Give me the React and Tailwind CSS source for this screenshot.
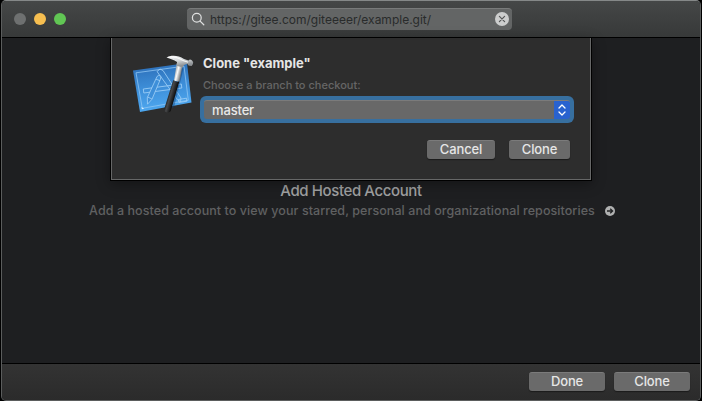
import React from "react";

function XcodeIcon() {
  return (
    <svg className="h-[70px] w-[75px] shrink-0" viewBox="0 0 75 70" fill="none">
      <defs>
        <linearGradient id="sheet" x1="35" y1="14" x2="40" y2="60" gradientUnits="userSpaceOnUse">
          <stop stopColor="#2d70ba" />
          <stop offset=".5" stopColor="#3e8fd9" />
          <stop offset="1" stopColor="#4ea8f0" />
        </linearGradient>
        <linearGradient id="steel" x1="52" y1="5" x2="54" y2="16" gradientUnits="userSpaceOnUse">
          <stop stopColor="#f4f5f5" />
          <stop offset=".5" stopColor="#d5d8da" />
          <stop offset="1" stopColor="#8f9396" />
        </linearGradient>
        <linearGradient id="shaft" x1="50" y1="22" x2="56" y2="23.5" gradientUnits="userSpaceOnUse">
          <stop stopColor="#a9adaf" />
          <stop offset=".4" stopColor="#fafafa" />
          <stop offset="1" stopColor="#777b7e" />
        </linearGradient>
        <linearGradient id="grip" x1="43" y1="44" x2="50" y2="46" gradientUnits="userSpaceOnUse">
          <stop stopColor="#1b1c1d" />
          <stop offset=".35" stopColor="#48494b" />
          <stop offset="1" stopColor="#0c0c0c" />
        </linearGradient>
      </defs>
      <path d="M8 20.5 62 13l4.500 39.500L15 62z" fill="url(#sheet)" />
      <path d="m11 22.800 48-6.600 4.300 34-46 8.100z" stroke="#8fc5f2" strokeWidth=".8" />
      <g stroke="#a3d2f8" strokeWidth=".8" strokeLinejoin="round">
        <path d="m18.300 39 38-5 .5 4-38 5z" />
        <path d="m32 21.500 3-2.500 3 1.500 18 27.500-.5 3.500-3-1.800z" />
        <path d="m32 26.500 1.800-1.300 2.200 1.300-.6 2.700-8.400 20-4.500 5-.2-6.500z" fill="#3e8fd9" />
        <path d="m31 29.200 4 1.500M22.500 47l4.300 1.800" />
        <path d="m53.500 49.500 8-1.300.4 3-8 1.300z" />
      </g>
      <path d="m16.500 57 .3 2.200 2.400-.4z" fill="#d9f0ff" />
      <path d="m56.500 18 2 .5-9.500 39-3 .5z" fill="#123f70" opacity=".45" />
      <path d="m51.800 13 5.700 2-3 17-5.500-1.500z" fill="url(#shaft)" />
      <path d="M48.300 30c2 1.500 4 2 6 1.600L45.700 61c-1.100 2.600-7.500 1.300-6.500-2z" fill="url(#grip)" />
      <path d="M41.500 7.600C46 4.800 53 5 59 9l4.500 1.600 1.300-1.200c1.700.3 3.100 1.300 3.400 3.200-.2 1.700-.7 2.800-1.700 3.400l-3-.5-1.200-1.700-3.200 1.200-1.500 2.500-5.800-1.700.2-3.800C48.800 9.800 45.500 9 41.500 7.600z" fill="url(#steel)" />
      <path d="M43 7.400c5-1 10 0 14.500 3l5.500 1.800" stroke="#fff" strokeWidth=".9" />
    </svg>
  );
}

function Button({ className, children }) {
  return (
    <button className={`flex h-[19px] items-center justify-center rounded-[3px] border-t border-[#7b7b7b] bg-[#6a6a6a] pb-px text-[13px] leading-none font-medium tracking-[-0.15px] text-[#e6e6e6] shadow-[0_1px_1px_#1b1b1b] ${className}`}>
      {children}
    </button>
  );
}

function CloneSheet() {
  return (
    <section className="absolute top-0 left-[108px] h-[143px] w-[482px] border-x border-b border-black bg-[#2d2d2d] shadow-[0_3px_12px_rgba(0,0,0,0.35)]">
      <div className="flex h-full border-x border-b border-[#666767] pt-3 pl-[13px]">
        <XcodeIcon />
        <div className="ml-[3px] flex w-[367px] flex-col">
          <h1 className="mt-[5px] text-[13px] leading-4 font-bold text-[#e6e6e6]">Clone "example"</h1>
          <p className="mt-[6px] text-[11px] leading-4 font-medium text-[#666666]">Choose a branch to checkout:</p>
          <div className="mt-[3px] -ml-[3px] flex h-[27px] w-[374px] rounded-[6px] bg-[#376f9f] p-1">
            <div className="flex flex-1 overflow-hidden rounded-[3px] border-t border-[#7b7b7b] bg-[#686868]">
              <span className="flex-1 pl-2 text-[13px] leading-[18px] font-medium tracking-[-0.15px] text-[#e8e8e8]">master</span>
              <span className="flex w-4 items-center justify-center bg-[#2962cf]">
                <svg className="h-3 w-2" viewBox="0 0 8 12" fill="none" stroke="#fff" strokeWidth="1.3" strokeLinecap="round" strokeLinejoin="round">
                  <path d="m1 4 3-3 3 3M1 8l3 3 3-3" />
                </svg>
              </span>
            </div>
          </div>
          <div className="mt-[17px] flex justify-end gap-[14px]">
            <Button className="w-[68px]">Cancel</Button>
            <Button className="w-[61px]">Clone</Button>
          </div>
        </div>
      </div>
    </section>
  );
}

export default function App() {
  return (
    <div className="h-[401px] w-[702px] overflow-hidden bg-black pl-px font-['Inter','Liberation_Sans',sans-serif]">
      <main className="flex h-full w-[700px] flex-col overflow-hidden rounded-[5px] border border-[#5b5d5d] border-t-[#858888] bg-[#1e1f21]">
        <header className="flex h-[37px] shrink-0 items-center border-b border-black bg-linear-to-b from-[#454747] to-[#373939] pl-3">
          <div className="flex gap-2">
            <i className="size-3 rounded-full bg-[#6e7070]" />
            <i className="size-3 rounded-full bg-[#f6be50]" />
            <i className="size-3 rounded-full bg-[#61c654]" />
          </div>
          <div className="ml-[121px] flex h-[22px] w-[325px] items-center rounded-[4px] border-t border-[#797b7b] bg-[#636565] pl-1">
            <svg className="mb-px size-[14px]" viewBox="0 0 14 14" fill="none" stroke="#dedfdf" strokeWidth="1.25" strokeLinecap="round">
              <circle cx="5.8" cy="5.8" r="4.4" />
              <path d="m9.1 9.1 3.7 3.7" />
            </svg>
            <span className="ml-[5px] flex-1 text-[12px] leading-4 whitespace-nowrap text-[#292b2b]">https://gitee.com/giteeeer/example.git/</span>
            <svg className="mr-[3px] mb-px size-[14px]" viewBox="0 0 14 14" fill="none" stroke="#555757" strokeWidth="1.2" strokeLinecap="round">
              <circle cx="7" cy="7" r="7" fill="#cccdcd" stroke="none" />
              <path d="m4.4 4.4 5.2 5.2m0-5.2L4.4 9.6" />
            </svg>
          </div>
        </header>
        <div className="relative flex min-h-0 flex-1 flex-col items-center bg-[#1e1f21] pt-[143px]">
          <h2 className="text-[15px] leading-5 font-medium tracking-[-0.4px] text-[#a0a1a1]">Add Hosted Account</h2>
          <div className="mt-[2px] ml-[2px] flex items-center gap-[10px]">
            <p className="text-[12.5px] leading-4 font-medium tracking-[0.07px] whitespace-nowrap text-[#606162]">Add a hosted account to view your starred, personal and organizational repositories</p>
            <svg className="size-[10px]" viewBox="0 0 10 10" fill="none" stroke="#222325" strokeWidth="1.3">
              <circle cx="5" cy="5" r="5" fill="#b0b1b1" stroke="none" />
              <path d="M2 5h5.5M5.2 2.7 7.6 5 5.2 7.3" />
            </svg>
          </div>
          <CloneSheet />
        </div>
        <footer className="flex h-[37px] shrink-0 items-start justify-end gap-[9px] border-t border-black bg-linear-to-b from-[#333333] to-[#2b2b2b] pt-2 pr-[10px]">
          <Button className="w-[76px]">Done</Button>
          <Button className="w-[76px]">Clone</Button>
        </footer>
      </main>
    </div>
  );
}
